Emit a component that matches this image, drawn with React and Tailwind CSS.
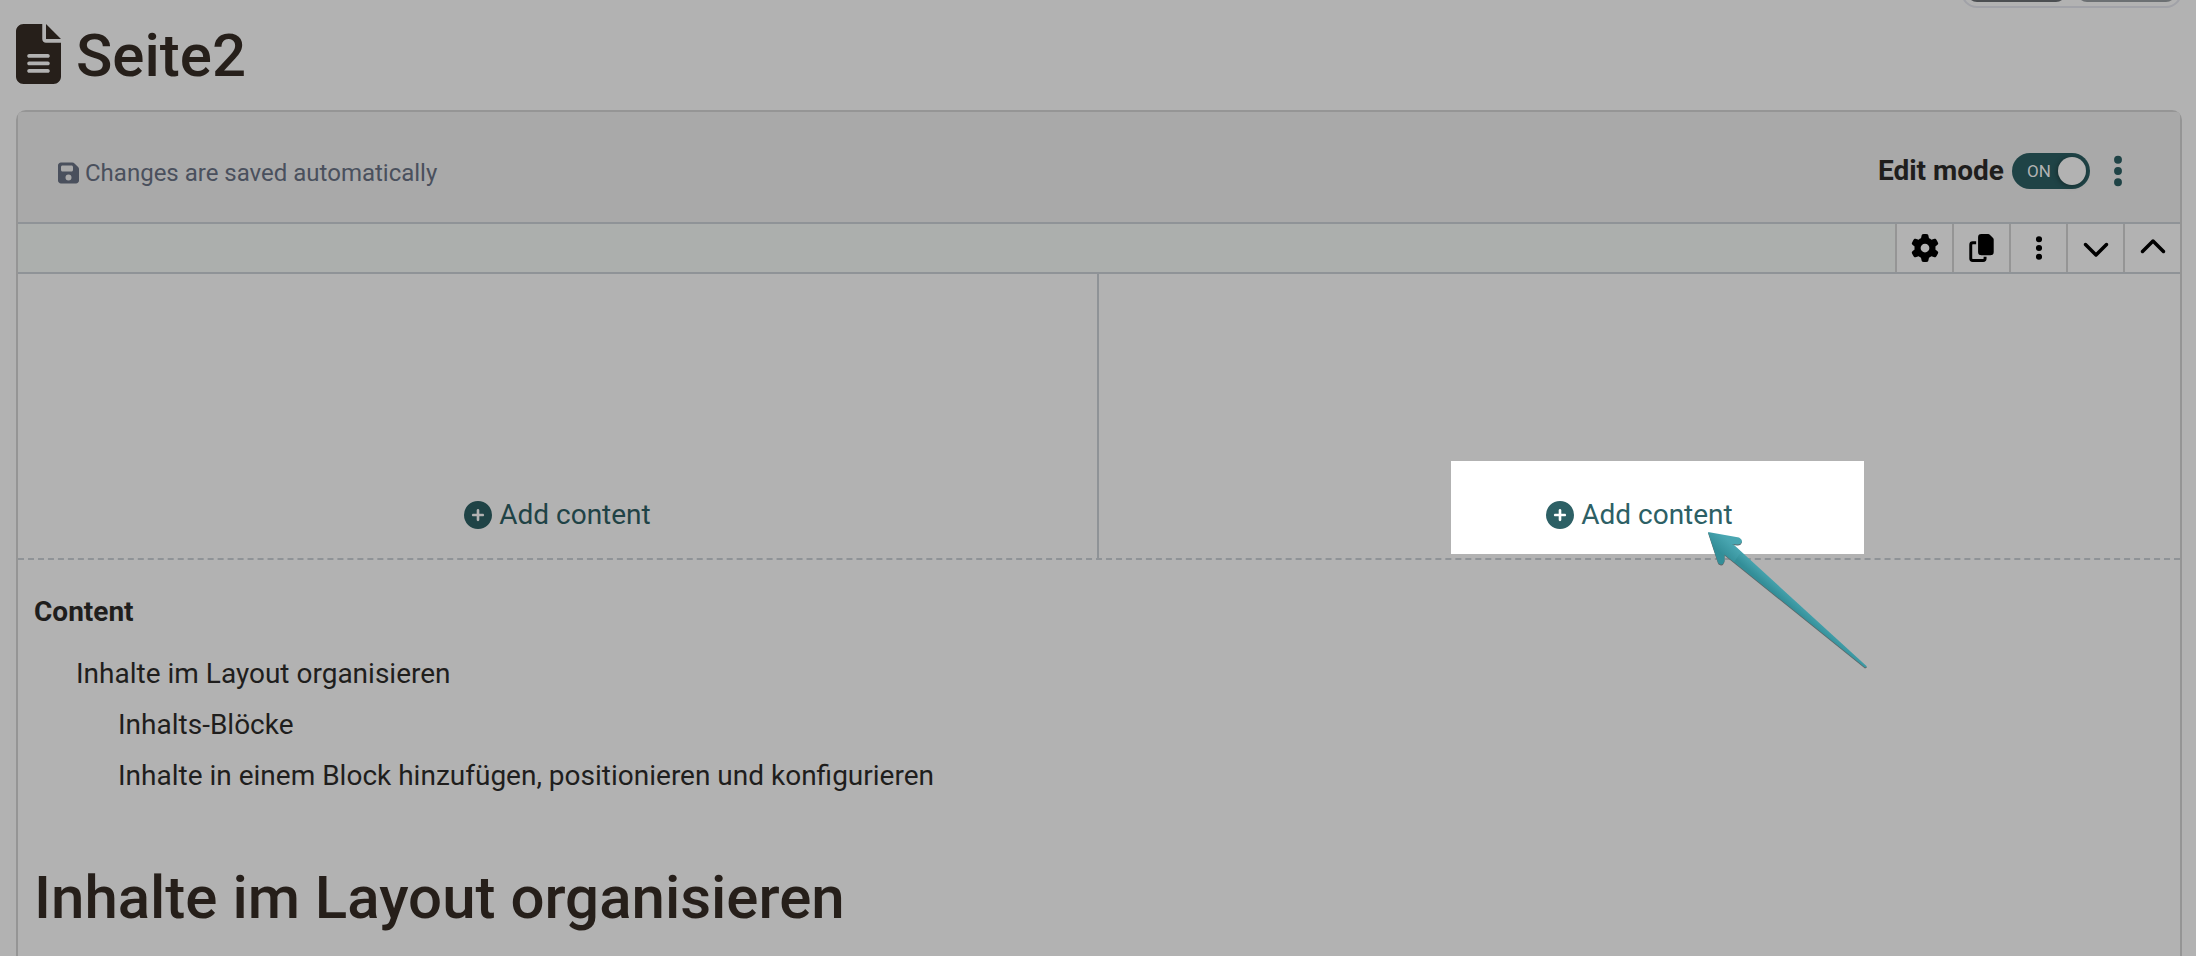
import { FaFileLines, FaFloppyDisk, FaEllipsisVertical, FaGear, FaChevronDown, FaChevronUp, FaCirclePlus } from "react-icons/fa6";

function ToolButton({ label, children }) {
  return (
    <button type="button" aria-label={label} className="flex w-[57px] items-center justify-center border-l-2 border-[#959595] bg-[#b2b2b2] text-black">
      {children}
    </button>
  );
}

function CopyIcon() {
  return (
    <svg viewBox="0 0 75 86" className="h-7 w-[25px]" aria-hidden="true">
      <path fill="currentColor" d="M37 0H58Q61 0 63 2L73 12Q75 14 75 17V55Q75 65 65 65H37Q27 65 27 55V10Q27 0 37 0Z" />
      <path fill="none" stroke="currentColor" strokeWidth="9" d="M21 27H10.500Q4.500 27 4.500 33V75.500Q4.500 81.500 10.500 81.500H42.500Q48.500 81.500 48.500 75.500V70" />
    </svg>
  );
}

function Arrow() {
  return (
    <svg className="pointer-events-none absolute top-[67px] left-[254px] h-36 w-42" viewBox="0 0 168 144" aria-hidden="true">
      <defs>
        <linearGradient id="arrow-fill" gradientUnits="userSpaceOnUse" x1="31" y1="19" x2="21" y2="30">
          <stop offset="0" stopColor="#49a6b1" />
          <stop offset="1" stopColor="#338e98" />
        </linearGradient>
        <linearGradient id="arrow-shaft" gradientUnits="userSpaceOnUse" x1="83" y1="63" x2="76" y2="71">
          <stop offset="0" stopColor="#49a6b1" />
          <stop offset="1" stopColor="#338e98" />
        </linearGradient>
      </defs>
      <path d="M3 5L34 10.500Q37 12 37 14Q36 18 32 17.500L28 17L162 139.500L160 140.500L19.500 27.500V34Q18 38 16 37.500Q13 37 12.500 34Z" fill="#5d6769" />
      <path d="M28 16L162 138.500L160 139.500L19.500 26.500Z" fill="url(#arrow-shaft)" />
      <path d="M3 4L34 9.500Q37 11 37 13.500Q36 17 32 16.500L27 16L36 24L29 34L19.500 26.500V33Q18 37 16 36.500Q13 36 12.500 33Z" fill="url(#arrow-fill)" />
    </svg>
  );
}

function AddContent({ highlighted }) {
  return (
    <button
      type="button"
      className={
        highlighted
          ? "flex h-[93px] w-[413px] items-center justify-center gap-[7px] bg-white pt-[14px] pr-9 text-[28px] leading-[42px] text-[#2d6065]"
          : "mx-auto mb-[22px] flex items-center gap-[7px] text-[28px] leading-[42px] text-[#1f4346]"
      }
    >
      <FaCirclePlus className="size-7" />
      Add content
    </button>
  );
}

export default function App() {
  return (
    <div className="h-screen overflow-hidden bg-[#b2b2b2] font-['Roboto',sans-serif] text-[28px] leading-[42px] text-[#1f1e1d]">
      <div className="pr-[14px] pl-4">
        <header className="flex h-[110px] items-start justify-between">
          <h1 className="flex items-start gap-[15px] pt-5 text-[60px] leading-[72px] font-medium text-[#261f1a]">
            <FaFileLines className="mt-1 h-[60px] w-[45px]" />
            Seite2
          </h1>
          <div className="-mt-12 flex h-14 items-end gap-[11px] rounded-2xl border-2 border-[#a1a2a8] p-1">
            <button type="button" aria-label="View" className="h-11 w-[99px] rounded-[10px] bg-[#4c4f52]" />
            <button type="button" aria-label="Options" className="h-11 w-[99px] rounded-[10px] bg-[#6c7073]" />
          </div>
        </header>

        <main className="min-h-[900px] rounded-t-[10px] border-2 border-[#959595]">
          <div className="flex h-[110px] items-center justify-between rounded-t-sm bg-[#a9a9a9] pt-2 pr-11 pl-10">
            <p className="flex items-center gap-[6px] pt-[3px] text-[24px] leading-9 text-[#4a505d]">
              <FaFloppyDisk className="h-6 w-[21px]" />
              Changes are saved automatically
            </p>
            <div className="flex items-center">
              <span id="edit-label" className="mr-2 font-bold">Edit mode</span>
              <button type="button" role="switch" aria-checked="true" aria-labelledby="edit-label" className="flex h-9 w-[78px] items-center justify-between rounded-full bg-[#1f4346] pr-1 pl-[15px] text-[17px] text-[#b2b2b2]">
                ON
                <span className="size-7 rounded-full bg-[#b2b2b2] shadow-[-1px_1px_5px_rgba(0,0,0,0.35)]" />
              </button>
              <button type="button" aria-label="More" className="ml-[10px] text-[#1f4346]">
                <FaEllipsisVertical className="size-9" />
              </button>
            </div>
          </div>

          <section aria-label="Layout">
            <div className="flex h-[52px] justify-end border-y-2 border-[#8f9397] bg-[#acafad]">
              <ToolButton label="Settings"><FaGear className="size-7" /></ToolButton>
              <ToolButton label="Duplicate"><CopyIcon /></ToolButton>
              <ToolButton label="More actions"><FaEllipsisVertical className="size-7" /></ToolButton>
              <ToolButton label="Move down"><FaChevronDown className="size-7" /></ToolButton>
              <ToolButton label="Move up"><FaChevronUp className="size-7" /></ToolButton>
            </div>
            <div className="grid h-[286px] grid-cols-2 border-b-2 border-dashed border-[#8f9397]">
              <div className="flex items-end border-r-2 border-solid border-r-[#8f9397]">
                <AddContent />
              </div>
              <div className="flex items-end justify-center pl-9">
                <div className="relative mb-1">
                  <AddContent highlighted />
                  <Arrow />
                </div>
              </div>
            </div>
          </section>

          <nav aria-label="Content" className="px-4 pt-[31px]">
            <h2 className="font-bold">Content</h2>
            <ul className="pt-5 pl-[42px]">
              <li>
                <a href="#layout">Inhalte im Layout organisieren</a>
                <ul className="flex flex-col gap-[9px] pt-[9px] pl-[42px]">
                  <li><a href="#blocks">Inhalts-Blöcke</a></li>
                  <li><a href="#configure">Inhalte in einem Block hinzufügen, positionieren und konfigurieren</a></li>
                </ul>
              </li>
            </ul>
          </nav>
          <h1 id="layout" className="px-4 pt-[65px] text-[60px] leading-[72px] font-medium text-[#261f1a]">Inhalte im Layout organisieren</h1>
        </main>
      </div>
    </div>
  );
}
